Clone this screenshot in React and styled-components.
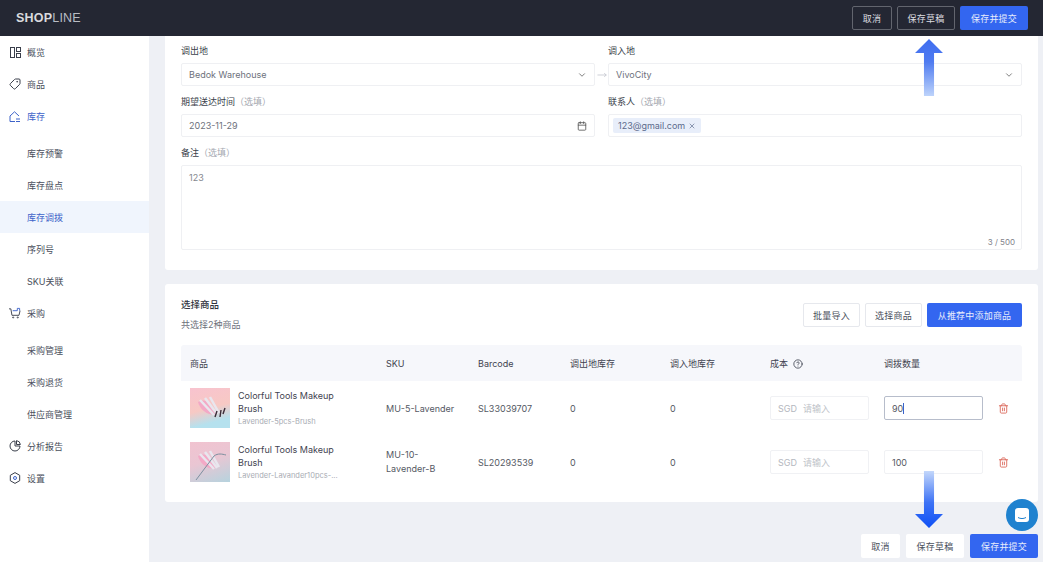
import React from "react";
import styled, { createGlobalStyle } from "styled-components";
import { LuChevronDown, LuMoveRight, LuCalendar, LuX, LuTrash2, LuTag, LuCircleHelp } from "react-icons/lu";

const GlobalStyle = createGlobalStyle`
  html, body { margin: 0; padding: 0; height: 100%; overflow: hidden; background: #eef0f5; }
  * { box-sizing: border-box; }
  body { font-family: Inter, "Noto Sans CJK SC", sans-serif; font-size: 9px; color: #4a4f5c; }
`;

const OverviewIcon = () => (
  <svg width="11" height="11" viewBox="0 0 11 11" fill="none" stroke="#3a3f4b" strokeWidth="1">
    <rect x="0.5" y="0.5" width="4" height="10" />
    <rect x="6.5" y="0.5" width="4" height="4" />
    <rect x="6.5" y="6.5" width="4" height="4" />
  </svg>
);

const HomeIcon = () => (
  <svg width="12" height="11" viewBox="0 0 12 11" fill="none" stroke="#3d63c9" strokeWidth="1">
    <path d="M1 10.5V5L5.5 .8 10 5M1 10.5h5M7 8h4M7 10.5h4" />
  </svg>
);

const CartIcon = () => (
  <svg width="13" height="12" viewBox="0 0 13 12" fill="none" stroke="#3a3f4b" strokeWidth="1">
    <path d="M0 1.5h2l1.2 7h7.6l1.2-5" />
    <path d="M4 3.5h5V1h2.5v2.5" stroke="#3d63c9" />
    <circle cx="4.5" cy="10.8" r=".6" />
    <circle cx="9.5" cy="10.8" r=".6" />
  </svg>
);

const ReportIcon = () => (
  <svg width="12" height="12" viewBox="0 0 12 12" fill="none" stroke="#3a3f4b" strokeWidth="1">
    <path d="M6 1a5 5 0 1 0 5 5H6z" />
    <path d="M7.5 .6A4.5 4.5 0 0 1 11.4 4.5H7.5z" />
  </svg>
);

const SettingIcon = () => (
  <svg width="12" height="12" viewBox="0 0 12 12" fill="none" stroke="#3a3f4b" strokeWidth="1">
    <path d="M6 .6l4.7 2.7v5.4L6 11.4 1.3 8.7V3.3z" />
    <circle cx="6" cy="6" r="1.5" stroke="#3d63c9" />
  </svg>
);

const ChatIcon = () => (
  <svg width="16" height="16" viewBox="0 0 16 16">
    <rect x="1" y="1" width="14" height="14" rx="3" fill="#fff" />
    <path d="M4 10.5c2.4 1.4 5.6 1.4 8 0" fill="none" stroke="#1f82cf" strokeWidth="1" />
  </svg>
);

const BrushThumb = ({ faded }) => (
  <Thumb $faded={faded}>
    <svg width="40" height="40" viewBox="0 0 40 40">
      <path d="M8 14c6-4 14 0 18 12-8 2-16-4-18-12z" fill="#f3a9c6" />
      <path d="M10 12l14 15M15 10l12 16M20 9l9 16" stroke="#e9e6ee" strokeWidth="2.5" />
      {!faded && <path d="M27 23l-2 6M31 22l-1 7M35 20l-2 6" stroke="#3b2c38" strokeWidth="1.4" />}
      {faded && <path d="M6 38l18-24M24 14c4-3 8-2 12-1" stroke="#7d8f9f" strokeWidth="1" fill="none" />}
    </svg>
  </Thumb>
);

const navTop = [
  { label: "概览", icon: <OverviewIcon /> },
  { label: "商品", icon: <LuTag size={12} color="#3a3f4b" style={{ transform: "scaleX(-1)" }} /> },
  { label: "库存", icon: <HomeIcon />, active: true },
];

const App = () => {
  return (
    <Page>
      <GlobalStyle />
      <TopBar>
        <Logo>
          <b>SHOP</b>LINE
        </Logo>
        <ButtonGroup>
          <DarkButton $w={40}>取消</DarkButton>
          <DarkButton $w={58}>保存草稿</DarkButton>
          <PrimaryButton $w={68}>保存并提交</PrimaryButton>
        </ButtonGroup>
      </TopBar>

      <Body>
        <Sidebar>
          {navTop.map((n) => (
            <NavItem key={n.label} $active={n.active}>
              <NavIcon>{n.icon}</NavIcon>
              {n.label}
            </NavItem>
          ))}
          <SubGroup>
            <SubItem>库存预警</SubItem>
            <SubItem>库存盘点</SubItem>
            <SubItem $active>库存调拨</SubItem>
            <SubItem>序列号</SubItem>
            <SubItem>SKU关联</SubItem>
          </SubGroup>
          <NavItem>
            <NavIcon><CartIcon /></NavIcon>
            采购
          </NavItem>
          <SubGroup>
            <SubItem>采购管理</SubItem>
            <SubItem>采购退货</SubItem>
            <SubItem>供应商管理</SubItem>
          </SubGroup>
          <NavItem>
            <NavIcon><ReportIcon /></NavIcon>
            分析报告
          </NavItem>
          <NavItem>
            <NavIcon><SettingIcon /></NavIcon>
            设置
          </NavItem>
        </Sidebar>

        <Main>
          <FormCard>
            <FieldRow>
              <Field>
                <Label>调出地</Label>
                <Input>
                  <span>Bedok Warehouse</span>
                  <LuChevronDown size={10} color="#666" />
                </Input>
              </Field>
              <Joint><LuMoveRight size={10} color="#c4c7cf" /></Joint>
              <Field>
                <Label>调入地</Label>
                <Input>
                  <span>VivoCity</span>
                  <LuChevronDown size={10} color="#666" />
                </Input>
              </Field>
            </FieldRow>
            <FieldRow>
              <Field>
                <Label>期望送达时间<Optional>（选填）</Optional></Label>
                <Input>
                  <span>2023-11-29</span>
                  <LuCalendar size={10} color="#555" />
                </Input>
              </Field>
              <Joint />
              <Field>
                <Label>联系人<Optional>（选填）</Optional></Label>
                <TagInput>
                  <Chip>123@gmail.com <LuX size={8} /></Chip>
                </TagInput>
              </Field>
            </FieldRow>
            <Field>
              <Label>备注<Optional>（选填）</Optional></Label>
              <TextArea>
                <span>123</span>
                <Counter>3 / 500</Counter>
              </TextArea>
            </Field>
          </FormCard>

          <ProductCard>
            <ProductHead>
              <div>
                <CardTitle>选择商品</CardTitle>
                <CardSub>共选择2种商品</CardSub>
              </div>
              <ButtonGroup>
                <OutlineButton $w={57}>批量导入</OutlineButton>
                <OutlineButton $w={57}>选择商品</OutlineButton>
                <PrimaryButton $w={95}>从推荐中添加商品</PrimaryButton>
              </ButtonGroup>
            </ProductHead>

            <TableHead>
              <span>商品</span>
              <span>SKU</span>
              <span>Barcode</span>
              <span>调出地库存</span>
              <span>调入地库存</span>
              <span>成本 <LuCircleHelp size={10} style={{ verticalAlign: "-2px", marginLeft: 2 }} /></span>
              <span>调拨数量</span>
            </TableHead>

            <TableRow>
              <ProductCell>
                <BrushThumb />
                <ProductText>
                  <ProductName>Colorful Tools Makeup Brush</ProductName>
                  <ProductVariant>Lavender-5pcs-Brush</ProductVariant>
                </ProductText>
              </ProductCell>
              <span>MU-5-Lavender</span>
              <span>SL33039707</span>
              <span>0</span>
              <span>0</span>
              <CostInput>SGD<em>请输入</em></CostInput>
              <QtyInput $focus>90<Caret /></QtyInput>
              <LuTrash2 size={11} color="#dc6b5e" />
            </TableRow>
            <TableRow>
              <ProductCell>
                <BrushThumb faded />
                <ProductText>
                  <ProductName>Colorful Tools Makeup Brush</ProductName>
                  <ProductVariant>Lavender-Lavander10pcs-...</ProductVariant>
                </ProductText>
              </ProductCell>
              <SkuWrap>MU-10-<br />Lavender-B</SkuWrap>
              <span>SL20293539</span>
              <span>0</span>
              <span>0</span>
              <CostInput>SGD<em>请输入</em></CostInput>
              <QtyInput>100</QtyInput>
              <LuTrash2 size={11} color="#dc6b5e" />
            </TableRow>
          </ProductCard>

          <Footer>
            <LightButton $w={39}>取消</LightButton>
            <LightButton $w={58}>保存草稿</LightButton>
            <PrimaryButton $w={68}>保存并提交</PrimaryButton>
          </Footer>
        </Main>
      </Body>

      <ArrowUp />
      <ArrowDown />
      <ChatBubble><ChatIcon /></ChatBubble>
    </Page>
  );
};

const Page = styled.div`
  position: relative;
  width: 1043px;
  height: 562px;
  overflow: hidden;
  background: #eef0f5;
`;

const TopBar = styled.header`
  height: 36px;
  background: #242733;
  display: flex;
  align-items: center;
  justify-content: space-between;
  padding: 0 15px 0 16px;
`;

const Logo = styled.div`
  font-family: "Liberation Sans", sans-serif;
  font-size: 12.5px;
  letter-spacing: 0.2px;
  color: #b9bcc4;
  font-weight: 400;

  b {
    color: #d9dade;
    font-weight: 700;
  }
`;

const ButtonGroup = styled.div`
  display: flex;
  gap: 5px;
`;

const BaseButton = styled.div`
  width: ${(p) => p.$w}px;
  height: 24px;
  border-radius: 2px;
  display: flex;
  align-items: center;
  justify-content: center;
  font-size: 9px;
  letter-spacing: 0.2px;
`;

const DarkButton = styled(BaseButton)`
  border: 1px solid #62656e;
  color: #dcdde0;
`;

const PrimaryButton = styled(BaseButton)`
  background: #3366f0;
  color: #e8edfb;
`;

const OutlineButton = styled(BaseButton)`
  background: #fff;
  border: 1px solid #e6e8ed;
  color: #4a4f5c;
`;

const LightButton = styled(BaseButton)`
  background: #fff;
  color: #4a4f5c;
`;

const Body = styled.div`
  display: flex;
  height: 526px;
`;

const Sidebar = styled.nav`
  width: 149px;
  flex: none;
  background: #fff;
  padding-top: -1px;
`;

const NavItem = styled.div`
  height: 32px;
  display: flex;
  align-items: center;
  padding-left: 9px;
  gap: 6px;
  font-size: 9px;
  color: ${(p) => (p.$active ? "#3d63c9" : "#4a4f5c")};
`;

const NavIcon = styled.span`
  width: 12px;
  display: flex;
  justify-content: center;
`;

const SubGroup = styled.div`
  padding-top: 5px;
`;

const SubItem = styled.div`
  height: 32px;
  display: flex;
  align-items: center;
  padding-left: 27px;
  font-size: 9px;
  color: ${(p) => (p.$active ? "#3d63c9" : "#4a4f5c")};
  background: ${(p) => (p.$active ? "#f0f5fd" : "transparent")};
`;

const Main = styled.main`
  flex: 1;
  padding: 0 5px 0 16px;
  display: flex;
  flex-direction: column;
`;

const Card = styled.section`
  background: #fff;
  border-radius: 0 0 3px 3px;
  padding: 8px 16px 0;
`;

const FormCard = styled(Card)`
  height: 234px;
  display: flex;
  flex-direction: column;
  gap: 9px;
`;

const FieldRow = styled.div`
  display: flex;
`;

const Field = styled.div`
  flex: 1;
  display: flex;
  flex-direction: column;
  gap: 6px;
`;

const Joint = styled.div`
  width: 13px;
  flex: none;
  display: flex;
  align-items: flex-end;
  justify-content: center;
  padding-bottom: 6px;
`;

const Label = styled.div`
  height: 13px;
  line-height: 13px;
  font-size: 9px;
  color: #3a3f4b;
`;

const Optional = styled.span`
  color: #a4a7b0;
`;

const Input = styled.div`
  height: 23px;
  border: 1px solid #eff0f3;
  border-radius: 2px;
  display: flex;
  align-items: center;
  justify-content: space-between;
  padding: 0 7px;
  font-size: 9px;
  color: #6d717c;
`;

const TagInput = styled(Input)`
  justify-content: flex-start;
  padding: 0 4px;
`;

const Chip = styled.span`
  height: 15px;
  background: #e8eefa;
  border-radius: 2px;
  padding: 0 5px;
  display: flex;
  align-items: center;
  gap: 3px;
  font-size: 9px;
  color: #5c6b8c;
`;

const TextArea = styled.div`
  position: relative;
  height: 85px;
  border: 1px solid #eff0f3;
  border-radius: 2px;
  padding: 6px 7px;
  font-size: 9px;
  color: #85888f;
`;

const Counter = styled.span`
  position: absolute;
  right: 6px;
  bottom: 2px;
  font-size: 8px;
  color: #7f828a;
`;

const ProductCard = styled(Card)`
  height: 218px;
  margin-top: 14px;
  border-radius: 3px;
  padding: 14px 16px 0;
`;

const ProductHead = styled.div`
  display: flex;
  justify-content: space-between;
  align-items: flex-start;
  height: 47px;
  padding-top: 0;

  ${ButtonGroup} {
    margin-top: 5px;
  }
`;

const CardTitle = styled.div`
  font-size: 9.5px;
  line-height: 14px;
  color: #2f333e;
  font-weight: 500;
`;

const CardSub = styled.div`
  margin-top: 6px;
  font-size: 9px;
  line-height: 13px;
  color: #6d717c;
`;

const columns = "196px 92px 92px 100px 100px 114px 114px 1fr";

const TableHead = styled.div`
  display: grid;
  grid-template-columns: ${columns};
  align-items: center;
  height: 36px;
  padding-left: 9px;
  background: #f6f7fb;
  border-radius: 3px 3px 0 0;
  font-size: 9px;
  color: #3f4350;
`;

const TableRow = styled.div`
  display: grid;
  grid-template-columns: ${columns};
  align-items: center;
  height: 54px;
  padding-left: 9px;
  font-size: 9px;
  color: #555964;
`;

const ProductCell = styled.div`
  display: flex;
  align-items: center;
  gap: 8px;
`;

const Thumb = styled.div`
  width: 40px;
  height: 40px;
  flex: none;
  overflow: hidden;
  background: ${(p) =>
    p.$faded
      ? "linear-gradient(160deg, #f1c3d0 0%, #eac6d3 45%, #b6d3de 100%)"
      : "linear-gradient(165deg, #f8c3cf 0%, #f7c9c4 50%, #b5e1ee 80%)"};
`;

const ProductText = styled.div`
  width: 116px;
`;

const ProductName = styled.div`
  font-size: 9px;
  line-height: 13px;
  color: #3f4350;
`;

const ProductVariant = styled.div`
  font-size: 7.5px;
  line-height: 13px;
  color: #a9acb4;
  white-space: nowrap;
`;

const SkuWrap = styled.div`
  line-height: 14.5px;
`;

const BoxInput = styled.div`
  height: 24px;
  width: 99px;
  border-radius: 2px;
  display: flex;
  align-items: center;
  padding: 0 7px;
  font-size: 9px;
`;

const CostInput = styled(BoxInput)`
  border: 1px solid #f0f1f4;
  color: #b4b7be;

  em {
    font-style: normal;
    margin-left: 6px;
    color: #c0c3c9;
  }
`;

const QtyInput = styled(BoxInput)`
  border: 1px solid ${(p) => (p.$focus ? "#b7bdcb" : "#f0f1f4")};
  color: #555964;
`;

const Caret = styled.i`
  display: inline-block;
  width: 1px;
  height: 11px;
  background: #3d63c9;
`;

const Footer = styled.div`
  display: flex;
  justify-content: flex-end;
  gap: 6px;
  margin-top: 32px;
  padding-right: 0;
`;

const ArrowUp = styled.div`
  position: absolute;
  left: 915px;
  top: 39px;
  width: 28px;
  height: 57px;
  background: linear-gradient(180deg, #3f6df0 0%, #4f7bf0 40%, #bdd3fb 100%);
  clip-path: polygon(50% 0, 100% 14px, 68% 14px, 68% 100%, 32% 100%, 32% 14px, 0 14px);
`;

const ArrowDown = styled.div`
  position: absolute;
  left: 915px;
  top: 471px;
  width: 28px;
  height: 57px;
  background: linear-gradient(0deg, #0f50f5 0%, #3e73f5 45%, #c3d7fb 100%);
  clip-path: polygon(32% 0, 68% 0, 68% calc(100% - 14px), 100% calc(100% - 14px), 50% 100%, 0 calc(100% - 14px), 32% calc(100% - 14px));
`;

const ChatBubble = styled.div`
  position: absolute;
  left: 1006px;
  top: 499px;
  width: 32px;
  height: 32px;
  border-radius: 50%;
  background: #1f82cf;
  display: flex;
  align-items: center;
  justify-content: center;
`;

export default App;
